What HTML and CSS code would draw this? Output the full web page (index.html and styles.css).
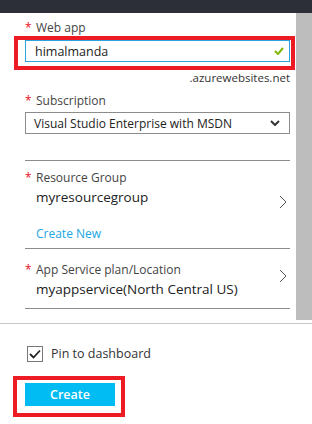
FILE: index.html
```html
<!DOCTYPE html>
<html lang="en">
<head>
    <meta charset="UTF-8">
    <meta name="viewport" content="width=device-width, initial-scale=1.0">
    <title>Web App - Create</title>
    <link rel="stylesheet" href="styles.css">
</head>
<body>
    <div class="topbar"></div>

    <div class="blade">
        <div class="content">
            <!-- Web app name -->
            <div class="field">
                <div class="label"><span class="req">*</span>Web app</div>
                <div class="input-wrap">
                    <div class="input">
                        <span>himalmanda</span>
                        <svg class="ok" width="10" height="8" viewBox="0 0 10 8"><path d="M1 4 L4 7 L9 1" fill="none" stroke="#7fba00" stroke-width="2"/></svg>
                    </div>
                    <div class="mark mark-input"></div>
                </div>
                <div class="suffix">.azurewebsites.net</div>
            </div>

            <!-- Subscription -->
            <div class="field sub">
                <div class="label"><span class="req">*</span>Subscription</div>
                <div class="select">
                    <span>Visual Studio Enterprise with MSDN</span>
                    <svg width="10" height="6" viewBox="0 0 10 6"><path d="M1 1 L5 5 L9 1" fill="none" stroke="#333" stroke-width="2"/></svg>
                </div>
            </div>

            <div class="row rg">
                <div class="row-text">
                    <div class="label"><span class="req">*</span>Resource Group</div>
                    <div class="value">myresourcegroup</div>
                    <div class="link">Create New</div>
                </div>
                <svg class="chev" width="8" height="14" viewBox="0 0 8 14"><path d="M1 1 L7 7 L1 13" fill="none" stroke="#555" stroke-width="1"/></svg>
            </div>

            <div class="row plan">
                <div class="row-text">
                    <div class="label"><span class="req">*</span>App Service plan/Location</div>
                    <div class="value">myappservice(North Central US)</div>
                </div>
                <svg class="chev" width="8" height="14" viewBox="0 0 8 14"><path d="M1 1 L7 7 L1 13" fill="none" stroke="#555" stroke-width="1"/></svg>
            </div>
        </div>
        <div class="scrollbar"></div>
    </div>

    <div class="footer">
        <label class="pin">
            <span class="box">
                <svg width="12" height="10" viewBox="0 0 12 10"><path d="M1 5 L4.5 8.5 L11 1.5" fill="none" stroke="#222" stroke-width="1.8"/></svg>
            </span>
            Pin to dashboard
        </label>
        <div class="btn-wrap">
            <button class="create">Create</button>
            <div class="mark mark-btn"></div>
        </div>
    </div>
</body>
</html>
```

FILE: styles.css
```css
body {
    margin: 0;
    font-family: "Open Sans", sans-serif;
    color: #333;
    background: #fff;
    width: 312px;
    height: 424px;
    overflow: hidden;
}
.topbar {
    height: 13px;
    background-color: #2c2f37;
}
.blade {
    display: flex;
    height: 307px;
}
.content {
    flex: 1;
    padding: 6px 6px 0 25px;
}
.scrollbar {
    width: 16px;
    background-color: #bdbdbd;
}

.label {
    font-size: 12px;
    line-height: 18px;
    color: #444;
}
.req {
    color: #e81123;
    display: inline-block;
    width: 11px;
}

.input-wrap {
    position: relative;
    margin-top: 3px;
}
.input {
    height: 20px;
    border: 1px solid #29a4dc;
    display: flex;
    align-items: center;
    justify-content: space-between;
    padding: 0 5px 0 9px;
    font-size: 12.5px;
    color: #222;
}
.suffix {
    text-align: right;
    font-size: 11.5px;
    line-height: 16px;
    margin-top: 8px;
    color: #333;
}

/* red annotation boxes */
.mark {
    position: absolute;
    border: 4px solid #ed1c24;
}
.mark-input {
    left: -11px;
    right: -5px;
    top: -4px;
    bottom: -8px;
}
.mark-btn {
    left: -12px;
    right: -10px;
    top: -7px;
    bottom: -11px;
}

.sub {
    margin-top: 6px;
    padding-bottom: 26px;
    border-bottom: 1px solid #8c8c8c;
}
.select {
    margin-top: 2px;
    height: 20px;
    border: 1px solid #8c8c8c;
    display: flex;
    align-items: center;
    justify-content: space-between;
    padding: 0 9px 0 8px;
    font-size: 12px;
    color: #222;
}

.row {
    display: flex;
    justify-content: space-between;
    border-bottom: 1px solid #8c8c8c;
}
.value {
    padding-left: 11px;
    font-size: 13.5px;
    line-height: 20px;
    color: #222;
}
.link {
    padding-left: 11px;
    font-size: 12px;
    line-height: 16px;
    color: #1aa6e4;
    margin-top: 19px;
}
.rg {
    padding: 8px 0 6px;
}
.rg .chev {
    margin: 26px 3px 0 0;
}
.plan {
    padding: 12px 0 9px;
}
.plan .chev {
    margin: 8px 3px 0 0;
}

.footer {
    margin-top: 3px;
    border-top: 1px solid #c8c8c8;
    padding: 21px 0 0 25px;
}
.pin {
    display: flex;
    align-items: center;
    font-size: 12.5px;
    color: #333;
}
.box {
    width: 14px;
    height: 14px;
    border: 1px solid #777;
    margin: 0 8px 0 2px;
    display: flex;
    align-items: center;
    justify-content: center;
}
.btn-wrap {
    position: relative;
    width: 90px;
    margin-top: 21px;
}
.create {
    display: block;
    width: 90px;
    height: 23px;
    border: none;
    background-color: #00bcf2;
    color: #fff;
    font-family: "Open Sans", sans-serif;
    font-weight: 600;
    font-size: 12.5px;
    padding: 0;
}
```
